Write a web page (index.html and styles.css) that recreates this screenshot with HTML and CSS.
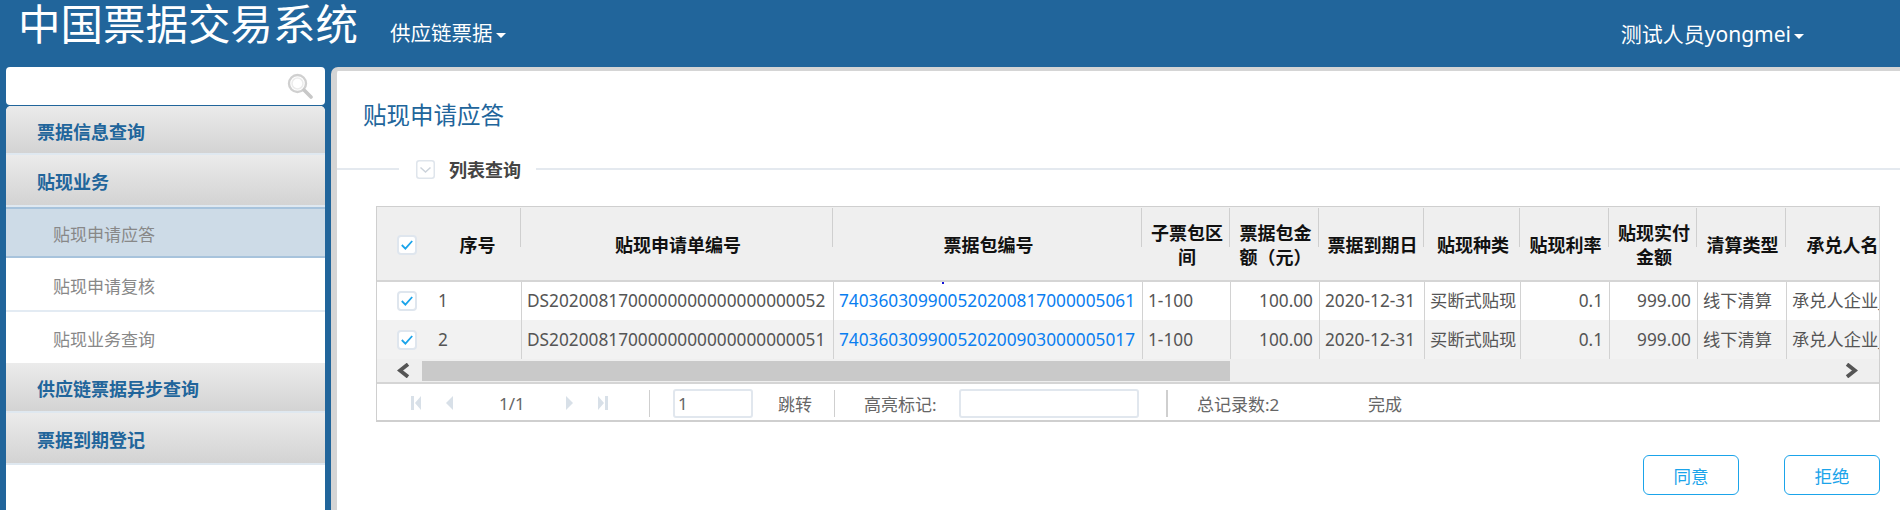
FILE: index.html
```html
<!DOCTYPE html>
<html lang="zh-CN">
<head>
<meta charset="utf-8">
<title>中国票据交易系统</title>
<link rel="stylesheet" href="styles.css">
</head>
<body>
<header class="topbar">
  <div class="brand">中国票据交易系统</div>
  <div class="nav-link">供应链票据<span class="caret"></span></div>
  <div class="user-link">测试人员yongmei<span class="caret"></span></div>
</header>
<div class="layout">
  <aside class="sidebar">
    <div class="search">
      <svg class="search-icon" width="26" height="26" viewBox="0 0 26 26" fill="none">
        <circle cx="10.5" cy="10.5" r="8.5" stroke="#d0d0d0" stroke-width="2.4"/>
        <circle cx="10.5" cy="10.5" r="5.5" stroke="#ececec" stroke-width="1.5"/>
        <path d="M17 17l7 7" stroke="#c8c8c8" stroke-width="3.6" stroke-linecap="round"/>
      </svg>
    </div>
    <nav class="menu">
      <div class="menu-head first">票据信息查询</div>
      <div class="menu-head tall">贴现业务</div>
      <div class="menu-sub active">贴现申请应答</div>
      <div class="menu-sub s-tall">贴现申请复核</div>
      <div class="menu-sub s-short">贴现业务查询</div>
      <div class="menu-head">供应链票据异步查询</div>
      <div class="menu-head tall">票据到期登记</div>
    </nav>
  </aside>
  <main class="content">
    <h1 class="page-title">贴现申请应答</h1>
    <div class="section">
      <span class="section-line short"></span>
      <svg class="section-icon" width="19" height="19" viewBox="0 0 19 19" fill="none">
        <rect x="0.75" y="0.75" width="17.5" height="17.5" rx="2.5" stroke="#dfe5ec" stroke-width="1.5"/>
        <path d="M4.5 7.5l5 4.5 5-4.5" stroke="#ccd3db" stroke-width="1.5"/>
      </svg>
      <span class="section-title">列表查询</span>
      <span class="section-line grow"></span>
    </div>
    <section class="grid-box">
      <div class="grid-clip">
        <table class="grid">
          <colgroup>
            <col class="c-check"><col class="c-seq"><col class="c-bill"><col class="c-pack"><col class="c-range"><col class="c-amount"><col class="c-date"><col class="c-kind"><col class="c-rate"><col class="c-pay"><col class="c-type"><col class="c-name">
          </colgroup>
          <thead>
            <tr>
              <th class="no-sep"><span class="check"><svg width="12" height="10" viewBox="0 0 12 10" fill="none"><path d="M0.8 5l3.6 3.6L11.2 1" stroke="#1ba4ea" stroke-width="1.8"/></svg></span></th>
              <th>序号</th>
              <th>贴现申请单编号</th>
              <th>票据包编号</th>
              <th>子票包区间</th>
              <th>票据包金额（元）</th>
              <th>票据到期日</th>
              <th>贴现种类</th>
              <th>贴现利率</th>
              <th>贴现实付金额</th>
              <th>清算类型</th>
              <th class="no-sep">承兑人名</th>
            </tr>
          </thead>
          <tbody>
            <tr>
              <td class="cell-check"><span class="check"><svg width="12" height="10" viewBox="0 0 12 10" fill="none"><path d="M0.8 5l3.6 3.6L11.2 1" stroke="#1ba4ea" stroke-width="1.8"/></svg></span></td>
              <td class="cell-seq">1</td>
              <td>DS2020081700000000000000000052</td>
              <td class="cell-pack"><a class="link">740360309900520200817000005061</a><span class="dot"></span></td>
              <td>1-100</td>
              <td class="num">100.00</td>
              <td>2020-12-31</td>
              <td>买断式贴现</td>
              <td class="num">0.1</td>
              <td class="num">999.00</td>
              <td>线下清算</td>
              <td>承兑人企业_</td>
            </tr>
            <tr class="alt">
              <td class="cell-check"><span class="check"><svg width="12" height="10" viewBox="0 0 12 10" fill="none"><path d="M0.8 5l3.6 3.6L11.2 1" stroke="#1ba4ea" stroke-width="1.8"/></svg></span></td>
              <td class="cell-seq">2</td>
              <td>DS2020081700000000000000000051</td>
              <td><a class="link">740360309900520200903000005017</a></td>
              <td>1-100</td>
              <td class="num">100.00</td>
              <td>2020-12-31</td>
              <td>买断式贴现</td>
              <td class="num">0.1</td>
              <td class="num">999.00</td>
              <td>线下清算</td>
              <td>承兑人企业_</td>
            </tr>
          </tbody>
        </table>
      </div>
      <div class="scroller">
        <svg class="arrow-left" width="13" height="15" viewBox="0 0 13 15" fill="none"><path d="M11 1.2L3 7.5l8 6.3" stroke="#555" stroke-width="3.8"/></svg>
        <div class="thumb"></div>
        <svg class="arrow-right" width="13" height="15" viewBox="0 0 13 15" fill="none"><path d="M2 1.2l8 6.3-8 6.3" stroke="#555" stroke-width="3.8"/></svg>
      </div>
      <div class="pager">
        <svg class="pg pg-first" width="10" height="14" viewBox="0 0 10 14"><path d="M0 0h3v14H0zM10 0v14L4 7z" fill="#d8e0e8"/></svg>
        <svg class="pg pg-prev" width="8" height="14" viewBox="0 0 8 14"><path d="M7 0v14L0 7z" fill="#d8e0e8"/></svg>
        <span class="pg-count">1/1</span>
        <svg class="pg pg-next" width="8" height="14" viewBox="0 0 8 14"><path d="M1 0v14l7-7z" fill="#d8e0e8"/></svg>
        <svg class="pg pg-last" width="10" height="14" viewBox="0 0 10 14"><path d="M0 0v14l6-7zM7 0h3v14H7z" fill="#d8e0e8"/></svg>
        <span class="pg-sep s1"></span>
        <span class="pg-input narrow">1</span>
        <span class="pg-jump">跳转</span>
        <span class="pg-sep s2"></span>
        <span class="pg-mark">高亮标记:</span>
        <span class="pg-input wide"></span>
        <span class="pg-sep s3"></span>
        <span class="pg-total">总记录数:2</span>
        <span class="pg-done">完成</span>
      </div>
    </section>
    <div class="actions">
      <button class="btn">同意</button>
      <button class="btn">拒绝</button>
    </div>
  </main>
</div>
</body>
</html>
```

FILE: styles.css
```css
* { box-sizing: border-box; }
html, body { margin: 0; height: 510px; overflow: hidden; }
body {
  font-family: "Noto Sans", "Noto Sans CJK SC", sans-serif;
  font-size: 17.25px;
  color: #666;
  background: #21659b;
  display: flex;
  flex-direction: column;
}

/* top bar */
.topbar {
  height: 67px;
  flex: none;
  display: flex;
  align-items: flex-start;
  background: #21659b;
  color: #fff;
  padding-left: 18px;
}
.brand { font-size: 42.5px; line-height: 48px; }
.nav-link { font-size: 20.5px; line-height: 28px; margin: 19px 0 0 32px; }
.user-link { font-size: 21px; line-height: 28px; margin: 20px 96px 0 auto; }
.caret {
  display: inline-block;
  margin-left: 3px;
  vertical-align: middle;
  border-top: 5px solid #fff;
  border-left: 5px solid transparent;
  border-right: 5px solid transparent;
}

.layout { flex: 1; display: flex; min-height: 0; }

/* sidebar */
.sidebar {
  width: 331px;
  flex: none;
  padding: 0 6px;
  display: flex;
  flex-direction: column;
}
.search {
  height: 38px;
  flex: none;
  background: #fff;
  border-radius: 4px;
  display: flex;
  justify-content: flex-end;
  align-items: center;
  padding-right: 12px;
}
.menu {
  flex: 1;
  margin-top: 1px;
  background: #fff;
  border-radius: 5px 5px 0 0;
  overflow: hidden;
}
.menu-head {
  height: 50px;
  padding: 2px 0 0 31px;
  display: flex;
  align-items: center;
  font-size: 18px;
  font-weight: 700;
  color: #21659b;
  background: linear-gradient(#ebebeb, #d3d3d3);
  border-bottom: 2px solid #dfe8f0;
}
.menu-head.first { height: 49px; }
.menu-head.tall { height: 52px; }
.menu-sub {
  height: 52px;
  padding: 2px 0 0 47px;
  display: flex;
  align-items: center;
  font-size: 17px;
  color: #888;
  background: #fff;
  border-bottom: 2px solid #e3ebf3;
}
.menu-sub.s-tall { height: 54px; }
.menu-sub.s-short { height: 51px; border-bottom: 0; }
.menu-sub.active {
  height: 51px;
  background: #cddbe7;
  border-top: 2px solid #a7c3dc;
  border-bottom: 2px solid #a7c3dc;
}

/* main */
.content {
  flex: 1;
  min-width: 0;
  background: #fff;
  border-left: 6px solid #d5d5d5;
  border-top: 4px solid #d5d5d5;
  border-top-left-radius: 7px;
  padding-bottom: 10px;
}
.page-title {
  margin: 26px 0 0 26px;
  font-size: 23.5px;
  line-height: 36px;
  font-weight: 400;
  color: #21659b;
}
.section {
  display: flex;
  align-items: center;
  height: 20px;
  margin-top: 26px;
}
.section-line { height: 2px; background: #e4e9ef; }
.section-line.short { width: 62px; }
.section-line.grow { flex: 1; }
.section-icon { margin-left: 17px; }
.section-title {
  margin: 0 15px 0 14px;
  font-size: 18px;
  font-weight: 700;
  color: #444;
}

/* data grid */
.grid-box {
  margin: 27px 20px 0 39px;
  border: 1px solid #cfcfcf;
  border-bottom-width: 2px;
  height: 216px;
}
.grid-clip { overflow: hidden; }
.grid {
  width: 1521px;
  table-layout: fixed;
  border-collapse: separate;
  border-spacing: 0;
  font-size: 17.25px;
}
.c-check { width: 56px; }
.c-seq { width: 89px; }
.c-bill { width: 312px; }
.c-pack { width: 309px; }
.c-range { width: 88px; }
.c-amount { width: 89px; }
.c-date { width: 105px; }
.c-kind { width: 96px; }
.c-rate { width: 89px; }
.c-pay { width: 88px; }
.c-type { width: 89px; }
.c-name { width: 111px; }

.grid th {
  height: 75px;
  padding: 2px 4px 0;
  font-size: 18px;
  font-weight: 700;
  line-height: 24px;
  color: #111;
  text-align: center;
  border-bottom: 2px solid #d5d5d5;
  background: linear-gradient(#cfcfcf, #cfcfcf) calc(100% - 1px) 1px / 1px 39px no-repeat, #efefef;
}
.grid th.no-sep { background: #efefef; }
.grid td {
  height: 38px;
  padding: 0 0 0 5px;
  white-space: nowrap;
  line-height: 24px;
  color: #555;
  background: #fff;
  border-right: 1px solid #d2d2d2;
}
.grid tr.alt td { height: 39px; background: #f2f2f2; }
.grid td.cell-check { border-right: 0; padding: 0 0 0 20px; }
.grid td.num { text-align: right; padding: 0 6px 0 0; }
.grid td.cell-pack { position: relative; }
.link { color: #0a7ef0; }
.dot {
  position: absolute;
  left: 108px;
  top: 0;
  width: 2px;
  height: 2px;
  background: #1414d8;
}
.check {
  display: flex;
  width: 20px;
  height: 20px;
  align-items: center;
  justify-content: center;
  background: #fff;
  border: 2px solid #dfe6ee;
  border-radius: 4px;
}
.grid th:first-child .check { margin-left: 16px; }

/* horizontal scroll strip */
.scroller {
  height: 23px;
  display: flex;
  align-items: center;
  background: #efefef;
}
.arrow-left { margin-left: 20px; }
.thumb {
  width: 808px;
  height: 20px;
  margin-left: 12px;
  background: #c9c9c9;
}
.arrow-right { margin-left: auto; margin-right: 21px; }

/* pager */
.pager {
  height: 40px;
  display: flex;
  align-items: center;
  border-top: 2px solid #d5d5d5;
  font-size: 17px;
  color: #666;
}
.pg-first { margin-left: 34px; }
.pg-prev { margin-left: 25px; }
.pg-count { margin-left: 45px; width: 27px; }
.pg-next { margin-left: 39px; }
.pg-last { margin-left: 25px; }
.pg-sep { width: 1px; height: 27px; background: #cfcfcf; }
.pg-sep.s1 { margin-left: 41px; }
.pg-input {
  height: 29px;
  line-height: 26px;
  padding-left: 3px;
  border: 2px solid #e1e7ee;
  border-radius: 3px;
  background: #fff;
}
.pg-input.narrow { width: 80px; margin-left: 23px; }
.pg-jump { margin-left: 25px; width: 34px; white-space: nowrap; }
.pg-sep.s2 { margin-left: 22px; }
.pg-mark { margin-left: 29px; width: 73px; white-space: nowrap; }
.pg-input.wide { width: 180px; margin-left: 22px; }
.pg-sep.s3 { margin-left: 27px; width: 2px; }
.pg-total { margin-left: 29px; width: 84px; white-space: nowrap; }
.pg-done { margin-left: 87px; }

/* actions */
.actions {
  display: flex;
  justify-content: flex-end;
  gap: 45px;
  margin: 33px 20px 0 0;
}
.btn {
  width: 96px;
  height: 40px;
  padding: 0;
  font: inherit;
  font-size: 17.5px;
  color: #1ba4ea;
  background: #fff;
  border: 1.5px solid #1ba4ea;
  border-radius: 6px;
}
```
